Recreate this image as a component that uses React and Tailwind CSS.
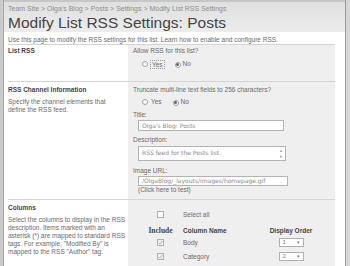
export default function App() {
  const Radio = ({ checked }) => (
    <span className="inline-flex items-center justify-center w-[6px] h-[6px] rounded-full border border-[#a0a0a0] bg-white">
      {checked && <span className="w-[3px] h-[3px] rounded-full bg-[#666]" />}
    </span>
  );
  const Check = ({ checked }) => (
    <span className={"inline-flex items-center justify-center w-[7px] h-[7px] border border-[#b0b0b0] " + (checked ? "bg-[#f0f0f0]" : "bg-white")}>
      {checked && (
        <svg width="5" height="5" viewBox="0 0 10 10">
          <path d="M1.5 5.5 L4 8 L8.5 2" fill="none" stroke="#a0a0a0" strokeWidth="1.6" />
        </svg>
      )}
    </span>
  );
  const Dropdown = ({ value }) => (
    <span className="flex items-center w-[25px] h-[9px] border border-[#b0b0b0] bg-white text-[#777] font-['DejaVu_Sans',sans-serif] text-[5.5px] leading-[7px]">
      <span className="pl-[3px] flex-1">{value}</span>
      <span className="pr-[3px] text-[5px]">▾</span>
    </span>
  );
  return (
    <div className="w-[350px] h-[266px] overflow-hidden flex bg-white font-['Liberation_Sans',Arial,sans-serif] text-[6.5px] leading-[8px] text-[#6a6a6a]">
      <div className="w-[4px] shrink-0 bg-[#cacaca] border-r border-[#a9a9a9]" />
      <div className="flex-1 flex flex-col border-t-2 border-[#c6c6c6]">
        <div className="h-[32px] pl-[4px] bg-gradient-to-b from-[#e0e0e0] to-[#ececec]">
          <div className="pt-[2px] text-[7px] leading-[9px] text-[#8c8c8c]">
            Team Site &gt; Olga's Blog &gt; Posts &gt; Settings &gt; Modify List RSS Settings
          </div>
          <div className="text-[15.5px] leading-[19px] text-[#444]">Modify List RSS Settings: Posts</div>
        </div>
        <div className="h-[17px] pl-[4px] pt-[4px]">
          Use this page to modify the RSS settings for this list. Learn how to enable and configure RSS.
        </div>
        <div className="ml-[4px] mr-[10px] border-t border-[#d4d4d4] flex flex-col">
          {/* Row 1 */}
          <div className="flex h-[37px] border-b border-[#d4d4d4]">
            <div className="w-[120px] pt-[2px] font-bold text-[#444]">List RSS</div>
            <div className="flex-1 bg-[#efefef] pl-[5px] pt-[2px]">
              <div>Allow RSS for this list?</div>
              <div className="flex items-center mt-[5px] pl-[9px] h-[8px]">
                <Radio />
                <span className="ml-[2px] px-[1px] border border-dotted border-[#999] leading-[7px]">Yes</span>
                <span className="ml-[10px]"><Radio checked /></span>
                <span className="ml-[2px]">No</span>
              </div>
            </div>
          </div>
          {/* Row 2 */}
          <div className="flex h-[118px] border-b border-[#d4d4d4]">
            <div className="w-[120px] pt-[4px]">
              <div className="font-bold text-[#444]">RSS Channel Information</div>
              <div className="mt-[4px]">Specify the channel elements that<br />define the RSS feed.</div>
            </div>
            <div className="flex-1 bg-[#efefef] pl-[5px] pt-[4px]">
              <div>Truncate multi-line text fields to 256 characters?</div>
              <div className="flex items-center mt-[4px] pl-[9px] h-[8px]">
                <Radio />
                <span className="ml-[3px]">Yes</span>
                <span className="ml-[11px]"><Radio checked /></span>
                <span className="ml-[2px]">No</span>
              </div>
              <div className="mt-[5px]">Title:</div>
              <div className="ml-[5px] mt-[1px] w-[146px] h-[11px] border border-[#b4b4b4] bg-white pl-[3px] font-['DejaVu_Sans',sans-serif] text-[6px] leading-[9px] text-[#8a8a8a]">
                Olga's Blog: Posts
              </div>
              <div className="mt-[5px]">Description:</div>
              <div className="ml-[5px] mt-[2px] w-[148px] h-[15px] border border-[#b4b4b4] bg-white flex">
                <div className="flex-1 pl-[3px] pt-[2px] font-['DejaVu_Sans',sans-serif] text-[6px] leading-[7px] text-[#8a8a8a]">RSS feed for the Posts list.</div>
                <div className="w-[8px] flex flex-col items-center justify-between text-[4px] leading-[5px] text-[#999] py-[1px]">
                  <span>▲</span>
                  <span>▼</span>
                </div>
              </div>
              <div className="mt-[6px]">Image URL:</div>
              <div className="ml-[5px] mt-[1px] w-[150px] h-[10px] border border-[#b4b4b4] bg-white pl-[3px] font-['DejaVu_Sans',sans-serif] text-[6px] leading-[8px] text-[#8a8a8a]">
                /OlgaBlog/_layouts/images/homepage.gif
              </div>
              <div className="ml-[5px]">(Click here to test)</div>
            </div>
          </div>
          {/* Row 3 */}
          <div className="flex h-[80px]">
            <div className="w-[120px] pt-[4px]">
              <div className="font-bold text-[#444]">Columns</div>
              <div className="mt-[4px] whitespace-nowrap">
                Select the columns to display in the RSS<br />
                description. Items marked with an<br />
                asterisk (*) are mapped to standard RSS<br />
                tags. For example, "Modified By" is<br />
                mapped to the RSS "Author" tag.
              </div>
            </div>
            <div className="flex-1 bg-[#efefef] pt-[10px]">
              <div className="grid grid-cols-[45px_82px_52px] pl-[10px] items-center">
                <div className="flex justify-center h-[9px] items-center"><Check /></div>
                <div>Select all</div>
                <div />
                <div className="mt-[8px] text-center font-bold text-[#444] font-['Liberation_Serif',serif] text-[7.5px]">Include</div>
                <div className="mt-[8px] font-bold text-[#444]">Column Name</div>
                <div className="mt-[8px] text-center font-bold text-[#444] whitespace-nowrap">Display Order</div>
                <div className="mt-[3px] flex justify-center"><Check checked /></div>
                <div className="mt-[3px]">Body</div>
                <div className="mt-[3px] flex justify-center"><Dropdown value="1" /></div>
                <div className="mt-[5px] flex justify-center"><Check checked /></div>
                <div className="mt-[5px]">Category</div>
                <div className="mt-[5px] flex justify-center"><Dropdown value="2" /></div>
              </div>
            </div>
          </div>
        </div>
      </div>
      <div className="w-[5px] shrink-0 border-l border-[#9a9a9a] bg-[#d6d6d6]" />
    </div>
  );
}
